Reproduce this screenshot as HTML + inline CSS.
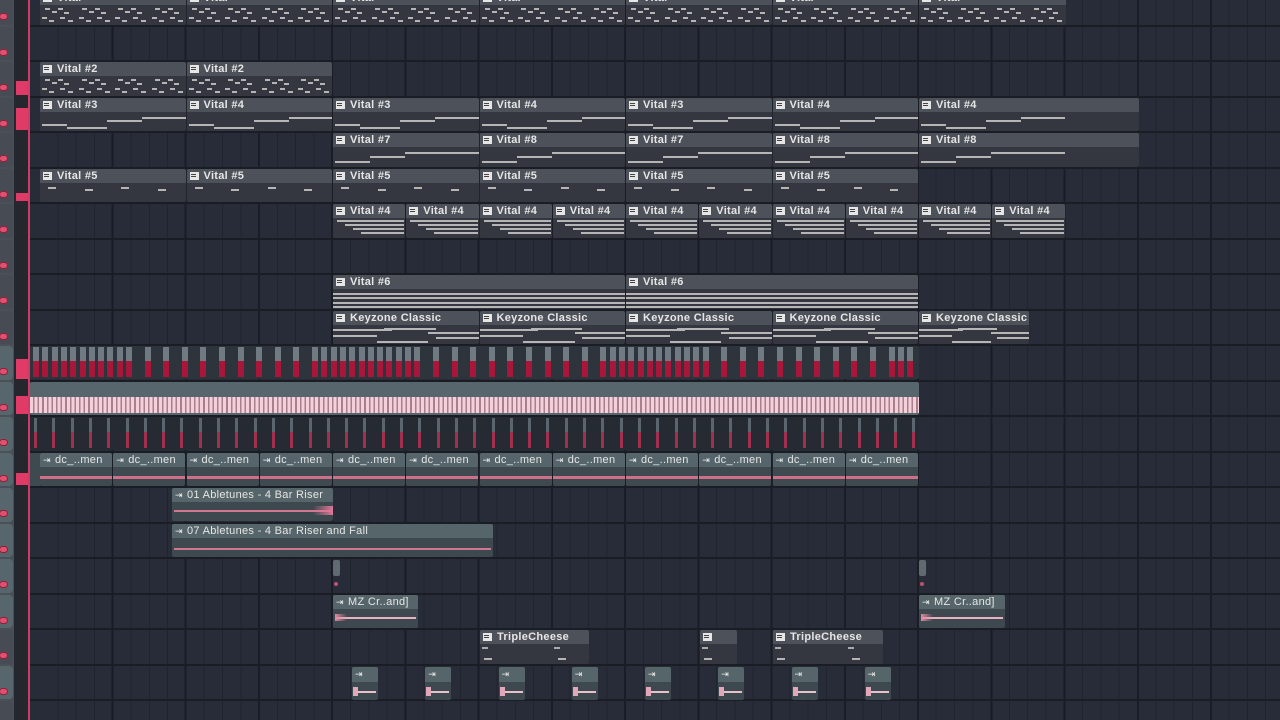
<!DOCTYPE html>
<html style="overflow:hidden"><head><meta charset="utf-8">
<style>
*{margin:0;padding:0;box-sizing:border-box}
html,body{width:1280px;height:720px;overflow:hidden}
body{background:#272c38;font-family:"Liberation Sans",sans-serif;position:relative}
#c{position:absolute;left:0;top:0;width:1280px;height:720px;overflow:hidden}
#grid{position:absolute;left:0;top:0;width:1280px;height:720px;
background:
repeating-linear-gradient(90deg,rgba(0,0,0,0) 0,rgba(0,0,0,0) 71.25px,#1a1d25 71.25px,#1a1d25 73.25px),
repeating-linear-gradient(90deg,rgba(0,0,0,0) 0,rgba(0,0,0,0) 17.3px,#20242d 17.3px,#20242d 18.3px);
background-position:40px 0,40px 0}
.b{position:absolute;overflow:hidden;border-radius:2px}
.h{position:absolute;left:0;right:0;top:0;height:14px;color:#e6e6e6;font-size:11px;font-weight:bold;line-height:14px;padding-left:17px;white-space:nowrap;letter-spacing:.3px}
.ic{position:absolute;left:3px;top:3px;width:9px;height:8px;background:#e6e6e6}
.ic:after{content:"";position:absolute;left:1px;top:2px;width:5px;height:1px;background:#444;box-shadow:0 2px 0 #444}
.au{position:absolute;left:3px;top:3px;color:#eee;font-size:9px;line-height:8px}
.n{position:absolute;height:2px;background:#b5b5b5}
.hr{position:absolute;left:30px;width:1250px;height:2px;background:#1a1d24}
</style></head><body>
<div id="grid"></div>
<div id="c"></div>
<script>
const C=document.getElementById('c');
function el(s,st,html){const d=document.createElement('div');if(s)d.className=s;d.style.cssText=st;if(html)d.innerHTML=html;C.appendChild(d);return d;}
const P=35.5, R0=-10;
function rt(r){return R0+r*P;}
for(let r=0;r<=20;r++) el('hr','top:'+(rt(r)-1)+'px');
function pat(r,x,w,label,notes,body){
 const y=rt(r);
 const b=el('b','left:'+x+'px;top:'+(y+1)+'px;width:'+(w-1)+'px;height:'+(P-2)+'px;background:'+(body||'#34373f'));
 const h=document.createElement('div');h.className='h';h.style.background='#4d5159';h.innerHTML='<span class="ic"></span>'+label;b.appendChild(h);
 if(notes)notes(b,w);
 return b;
}
function nt(b,x,y,w,c){const d=document.createElement('div');d.className='n';d.style.cssText='left:'+x+'px;top:'+y+'px;width:'+w+'px'+(c?';background:'+c:'');b.appendChild(d);}
const S=146.5;
function dots(b,w){for(let i=0;i<w;i+=36.6){[[5,17],[12,20],[18,17],[24,21],[2,26],[9,29],[20,26],[28,29]].forEach(p=>nt(b,i+p[0],p[1],5));}}
function lines3(b,w){nt(b,2,26,25);nt(b,27,29,40);nt(b,67,22,35);nt(b,102,19,44);}
function lines7(b,w){nt(b,2,28,35);nt(b,37,23,35);nt(b,72,19,74);}
function dash5(b,w){for(let i=8;i<w;i+=36.6)nt(b,i,Math.floor(i/36.6)%2?20:18,8);}
function ramp(b,w){for(let k=0;k<4;k++)nt(b,4+k*8,16+k*4,w-6-k*8);}
function six(b,w){[18,22,27,31].forEach(y=>nt(b,0,y,w));}
function key(b,w){nt(b,0,18,w*0.4);nt(b,0,24,w*0.3);nt(b,w*0.3,30,w*0.35);nt(b,w*0.35,17,w*0.35);nt(b,w*0.65,21,w*0.35);nt(b,w*0.7,26,w*0.3);}
for(let i=0;i<7;i++)pat(0,40+i*S,i==6?148:S,'Vital',dots);
for(let i=0;i<2;i++)pat(2,40+i*S,S,'Vital #2',dots);
['Vital #3','Vital #4','Vital #3','Vital #4','Vital #3','Vital #4'].forEach((l,i)=>pat(3,40+i*S,S,l,lines3));
pat(3,919,221,'Vital #4',lines3);
['Vital #7','Vital #8','Vital #7','Vital #8'].forEach((l,i)=>pat(4,333+i*S,S,l,lines7));
pat(4,919,221,'Vital #8',lines7);
for(let i=0;i<6;i++)pat(5,40+i*S,S,'Vital #5',dash5);
for(let i=0;i<10;i++)pat(6,333+i*73.25,73.25,'Vital #4',ramp);
pat(8,333,293,'Vital #6',six);pat(8,626,293,'Vital #6',six);
for(let i=0;i<4;i++)pat(9,333+i*S,S,'Keyzone Classic',key);
pat(9,919,111,'Keyzone Classic',key);
let y=rt(10);
el('b','left:30px;top:'+(y+1)+'px;width:889px;height:33px;background:#2e343c');
for(let x=33;x<915;x+=9.3){if(Math.sin(x*1.7)>-0.5){el('','position:absolute;left:'+x+'px;top:'+(y+2)+'px;width:6px;height:14px;background:#707a82');el('','position:absolute;left:'+x+'px;top:'+(y+16)+'px;width:6px;height:16px;background:#a8163a');}}
y=rt(11);
el('b','left:30px;top:'+(y+1)+'px;width:889px;height:33px;background:#56666c');
el('','position:absolute;left:30px;top:'+(y+16)+'px;width:889px;height:16px;background:repeating-linear-gradient(90deg,#f3d0da 0,#f3d0da 3px,#a7808c 3px,#a7808c 4.6px)');
y=rt(12);
el('b','left:30px;top:'+(y+1)+'px;width:889px;height:33px;background:#252a33');
for(let x=34;x<915;x+=18.3){el('','position:absolute;left:'+x+'px;top:'+(y+2)+'px;width:3px;height:14px;background:#5b6570');el('','position:absolute;left:'+x+'px;top:'+(y+16)+'px;width:3px;height:16px;background:#a0304e');}
y=rt(13);
for(let i=0;i<12;i++){const x=40+i*73.25;const b=el('b','left:'+x+'px;top:'+(y+1)+'px;width:72px;height:33px;background:#3e4a50');
 b.innerHTML='<div class="h" style="background:#55656b;font-weight:normal;padding-left:15px">dc_..men</div><span class="au">⇥</span><div style="position:absolute;left:0;right:0;top:23px;height:3px;background:#d07088"></div>';}
el('','position:absolute;left:30px;top:'+(y+1)+'px;width:10px;height:33px;background:#3e4a50');
function aud(r,x,w,label,wave){const y=rt(r);const b=el('b','left:'+x+'px;top:'+(y+1)+'px;width:'+w+'px;height:33px;background:#3d494f');
 b.innerHTML='<div class="h" style="background:#566569;font-weight:normal;padding-left:15px">'+label+'</div><span class="au">⇥</span>'+(wave||'');}
aud(14,172,161,'01 Abletunes - 4 Bar Riser','<div style="position:absolute;left:2px;right:2px;top:22px;height:2px;background:#d07890"></div><div style="position:absolute;right:0;top:18px;width:20px;height:9px;background:linear-gradient(90deg,transparent,#e07898)"></div>');
aud(15,172,321,'07 Abletunes - 4 Bar Riser and Fall','<div style="position:absolute;left:2px;right:2px;top:24px;height:2px;background:#d07890"></div>');
y=rt(16);
[333,919].forEach(x=>{el('','position:absolute;left:'+x+'px;top:'+(y+2)+'px;width:7px;height:16px;background:#5f6b70;border-radius:2px');el('','position:absolute;left:'+(x+1)+'px;top:'+(y+24)+'px;width:4px;height:4px;background:#c05070;border-radius:2px');});
const mzw='<div style="position:absolute;left:2px;right:2px;top:22px;height:2px;background:#e8b0c0"></div><div style="position:absolute;left:2px;top:19px;width:12px;height:7px;background:linear-gradient(90deg,#e08aa0,transparent)"></div>';
aud(17,333,85,'MZ Cr..and]',mzw);aud(17,919,86,'MZ Cr..and]',mzw);
function tc(b,w){nt(b,4,28,8);nt(b,w-32,28,8);nt(b,2,17,6,'#aaa');nt(b,w-36,17,6,'#aaa');}
pat(18,480,110,'TripleCheese',tc);pat(18,700,38,'',(b,w)=>{nt(b,4,28,8);nt(b,2,17,6,'#aaa');});pat(18,773,111,'TripleCheese',tc);
y=rt(19);
for(let i=0;i<8;i++){const x=352+i*73.25;const b=el('b','left:'+x+'px;top:'+(y+2)+'px;width:26px;height:33px;background:#3d494f');
 b.innerHTML='<div class="h" style="background:#566569;height:15px"></div><span class="au">⇥</span><div style="position:absolute;left:1px;right:2px;top:24px;height:2px;background:#e8c0cc"></div><div style="position:absolute;left:1px;top:20px;width:5px;height:9px;background:#e0a8b8"></div>';}
el('','position:absolute;left:0;top:0;width:14px;height:720px;background:#4a5058');
el('','position:absolute;left:14px;top:0;width:15px;height:720px;background:#24272e');
for(let r=0;r<=20;r++){const t=rt(r);
 const teal=(r>=10&&r<=19&&r!=18);
 el('','position:absolute;left:0;top:'+(t+1)+'px;width:13px;height:'+(P-2)+'px;background:'+(teal?'#56666c':'#474b53')+';border-radius:0 4px 4px 0');
 el('','position:absolute;left:-1px;top:'+(t+23)+'px;width:9px;height:7px;background:#e05070;border-radius:4px;box-shadow:inset 0 0 0 1px #8a2038');}
[[2,14],[3,22],[5,8],[10,20],[11,18],[13,12]].forEach(a=>{const t=rt(a[0]);el('','position:absolute;left:16px;top:'+(t+P-2-a[1])+'px;width:12px;height:'+a[1]+'px;background:#e03a66');});
el('','position:absolute;left:28px;top:0;width:2px;height:720px;background:#d03b63');
</script>
</body></html>
